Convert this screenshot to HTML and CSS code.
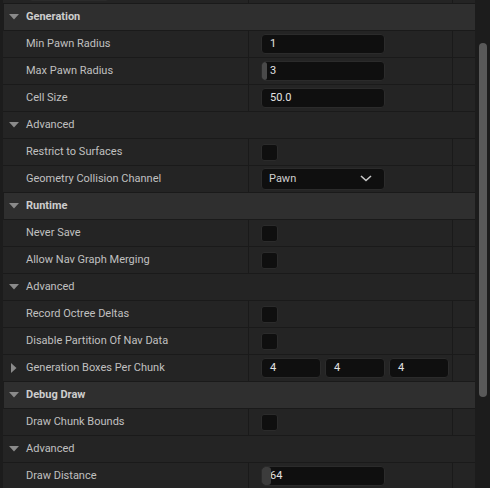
FILE: index.html
```html
<!DOCTYPE html>
<html>
<head>
<meta charset="utf-8">
<link rel="stylesheet" href="styles.css">
</head>
<body>
<div class="panel">
  <div class="list">
    <div class="row prop partial">
      <div class="name"><div class="search"></div></div>
      <div class="value"></div>
      <div class="reset"></div>
    </div>

    <div class="row cat"><svg class="arrow" viewBox="0 0 10 6"><path d="M0 0H10L5 5.5Z"/></svg><span>Generation</span></div>
    <div class="row prop"><div class="name">Min Pawn Radius</div><div class="value"><div class="input">1</div></div><div class="reset"></div></div>
    <div class="row prop"><div class="name">Max Pawn Radius</div><div class="value"><div class="input"><span class="handle"></span>3</div></div><div class="reset"></div></div>
    <div class="row prop"><div class="name">Cell Size</div><div class="value"><div class="input">50.0</div></div><div class="reset"></div></div>
    <div class="row sub"><svg class="arrow" viewBox="0 0 10 6"><path d="M0 0H10L5 5.5Z"/></svg><span>Advanced</span></div>
    <div class="row prop"><div class="name">Restrict to Surfaces</div><div class="value"><div class="check"></div></div><div class="reset"></div></div>
    <div class="row prop"><div class="name">Geometry Collision Channel</div><div class="value"><div class="combo"><span>Pawn</span><svg class="chev" viewBox="0 0 12 7"><path d="M1 1L6 5.5L11 1"/></svg></div></div><div class="reset"></div></div>

    <div class="row cat"><svg class="arrow" viewBox="0 0 10 6"><path d="M0 0H10L5 5.5Z"/></svg><span>Runtime</span></div>
    <div class="row prop"><div class="name">Never Save</div><div class="value"><div class="check"></div></div><div class="reset"></div></div>
    <div class="row prop"><div class="name">Allow Nav Graph Merging</div><div class="value"><div class="check"></div></div><div class="reset"></div></div>
    <div class="row sub"><svg class="arrow" viewBox="0 0 10 6"><path d="M0 0H10L5 5.5Z"/></svg><span>Advanced</span></div>
    <div class="row prop"><div class="name">Record Octree Deltas</div><div class="value"><div class="check"></div></div><div class="reset"></div></div>
    <div class="row prop"><div class="name">Disable Partition Of Nav Data</div><div class="value"><div class="check"></div></div><div class="reset"></div></div>
    <div class="row prop"><div class="name expander"><svg class="rarrow" viewBox="0 0 6 10"><path d="M0 0V10L5.5 5Z"/></svg>Generation Boxes Per Chunk</div><div class="value triple"><div class="input small">4</div><div class="input small">4</div><div class="input small">4</div></div><div class="reset"></div></div>

    <div class="row cat"><svg class="arrow" viewBox="0 0 10 6"><path d="M0 0H10L5 5.5Z"/></svg><span>Debug Draw</span></div>
    <div class="row prop"><div class="name">Draw Chunk Bounds</div><div class="value"><div class="check"></div></div><div class="reset"></div></div>
    <div class="row sub"><svg class="arrow" viewBox="0 0 10 6"><path d="M0 0H10L5 5.5Z"/></svg><span>Advanced</span></div>
    <div class="row prop"><div class="name">Draw Distance</div><div class="value"><div class="input"><span class="handle wide"></span>64</div></div><div class="reset"></div></div>
  </div>
  <div class="scrollbar"><div class="thumb"></div></div>
</div>
</body>
</html>
```
FILE: styles.css
```css
* { box-sizing: border-box; }
html, body { margin: 0; padding: 0; background: #1c1c1c; }
body {
  font-family: Roboto, "Noto Sans", "Liberation Sans", sans-serif;
  font-size: 11px;
  color: #c0c0c0;
  width: 490px;
  height: 488px;
  overflow: hidden;
}
.panel {
  display: flex;
  width: 490px;
  height: 488px;
  overflow: hidden;
  background: #1c1c1c;
}
.list {
  flex: 0 0 475px;
  display: flex;
  flex-direction: column;
  margin-top: -23px;
  padding-left: 3px;
}
.row {
  flex: 0 0 27px;
  height: 27px;
  border-bottom: 1px solid #1a1a1a;
  background: #242424;
  display: flex;
  align-items: stretch;
}
.cat {
  background: #2f2f2f;
  font-weight: bold;
  color: #cdcdcd;
  align-items: center;
  margin-left: 1px;
}
.sub {
  align-items: center;
  color: #c0c0c0;
}
.cat span, .sub span { padding-bottom: 2px; }
.arrow {
  width: 10px;
  height: 6px;
  margin-left: 6px;
  margin-right: 7px;
  fill: #8a8a8a;
}
.cat .arrow { margin-left: 5px; }
.name {
  width: 246px;
  flex: 0 0 246px;
  border-right: 1px solid #1a1a1a;
  display: flex;
  align-items: center;
  padding-left: 23px;
  padding-bottom: 2px;
  white-space: nowrap;
}
.name.expander { padding-left: 8px; }
.rarrow {
  width: 6px;
  height: 10px;
  fill: #8a8a8a;
  margin-right: 9px;
  margin-top: 2px;
}
.value {
  flex: 0 0 204px;
  border-right: 1px solid #1a1a1a;
  display: flex;
  align-items: center;
  padding-left: 12px;
}
.reset { flex: 1; }
.triple { gap: 4px; }
.input {
  position: relative;
  width: 124px;
  height: 20px;
  background: #0f0f0f;
  border: 1px solid #2b2b2b;
  border-radius: 4px;
  color: #e2e2e2;
  display: flex;
  align-items: center;
  padding-left: 8px;
  padding-bottom: 1px;
  overflow: hidden;
}
.input.small { width: 60px; }
.handle {
  position: absolute;
  left: 0;
  top: 0;
  bottom: 0;
  width: 5px;
  background: #4a4a4a;
  border-radius: 3px;
}
.handle.wide { width: 9px; background: #3c3c3c; }
.check {
  width: 17px;
  height: 17px;
  background: #0f0f0f;
  border: 1px solid #2b2b2b;
  border-radius: 3px;
}
.combo {
  width: 124px;
  height: 22px;
  background: #0f0f0f;
  border: 1px solid #2b2b2b;
  border-radius: 4px;
  color: #d0d0d0;
  display: flex;
  align-items: center;
  justify-content: space-between;
  padding-left: 7px;
  padding-right: 12px;
  padding-bottom: 1px;
}
.chev {
  width: 12px;
  height: 7px;
  fill: none;
  stroke: #c8c8c8;
  stroke-width: 1.6;
}
.partial .name { align-items: flex-end; padding-left: 25px; padding-bottom: 0; }
.search {
  width: 82px;
  height: 20px;
  margin-bottom: 2px;
  background: #1c1c1c;
  border: 1px solid #2b2b2b;
  border-radius: 4px;
}
.scrollbar {
  flex: 1;
  background: #1c1c1c;
  padding: 43px 3px 0 4px;
}
.thumb {
  width: 8px;
  height: 354px;
  background: #595959;
  border-radius: 4px;
}
```
